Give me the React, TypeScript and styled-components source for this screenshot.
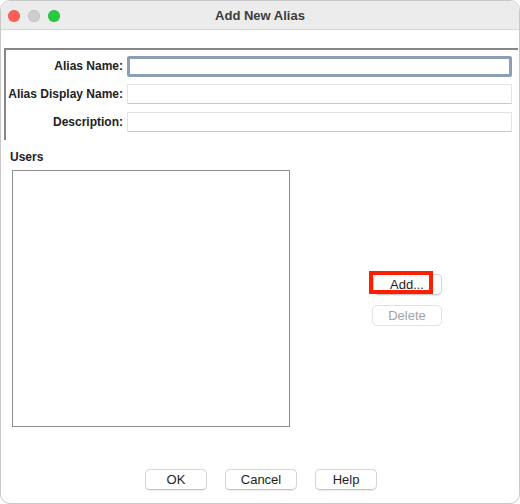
import React from "react";
import styled, { createGlobalStyle } from "styled-components";

const Global = createGlobalStyle`
  html, body { margin: 0; padding: 0; background: #ffffff; }
  body { font-family: "Liberation Sans", Arial, sans-serif; }
  * { box-sizing: border-box; }
`;

const Window = styled.div`
  width: 520px;
  height: 504px;
  background: #ffffff;
  border: 1px solid #c9c9c9;
  border-radius: 10px;
  overflow: hidden;
  display: flex;
  flex-direction: column;
`;

const TitleBar = styled.div`
  height: 29px;
  flex: none;
  background: #ececec;
  border-bottom: 1px solid #d6d6d6;
  display: grid;
  grid-template-columns: 1fr auto 1fr;
  align-items: center;
`;

const Lights = styled.div`
  display: flex;
  gap: 8px;
  padding-left: 7px;
  padding-top: 1px;
`;

const Light = styled.span<{ $color: string }>`
  width: 12px;
  height: 12px;
  border-radius: 50%;
  background: ${(p) => p.$color};
  box-shadow: inset 0 0 0 0.5px rgba(0, 0, 0, 0.12);
`;

const Title = styled.div`
  font-size: 13px;
  font-weight: 700;
  color: #3d3d3d;
  padding-top: 1px;
`;

const Content = styled.div`
  flex: 1;
  display: flex;
  flex-direction: column;
`;

const FormPanel = styled.div`
  margin: 18px 1px 0 3px;
  height: 92px;
  border-top: 2px solid #878787;
  border-left: 2px solid #878787;
  padding: 6px 6px 0 0;
  display: grid;
  grid-template-columns: 117px 1fr;
  column-gap: 4px;
  row-gap: 8px;
  grid-auto-rows: 20px;
  align-items: center;
`;

const Label = styled.label`
  font-size: 12px;
  font-weight: 700;
  color: #222222;
  text-align: right;
  white-space: nowrap;
`;

const Field = styled.div<{ $focused?: boolean }>`
  height: ${(p) => (p.$focused ? "21px" : "20px")};
  background: #ffffff;
  border: ${(p) => (p.$focused ? "3px solid #8c9db4" : "1px solid #e3e3e3")};
  border-bottom-color: ${(p) => (p.$focused ? "#8c9db4" : "#c8c8c8")};
  border-radius: ${(p) => (p.$focused ? "2px" : "1px")};
`;

const SectionLabel = styled.div`
  margin: 10px 0 0 9px;
  font-size: 12px;
  font-weight: 700;
  line-height: 14px;
  color: #222222;
`;

const UsersRow = styled.div`
  margin-top: 6px;
  display: flex;
`;

const UserList = styled.div`
  margin-left: 11px;
  width: 278px;
  height: 257px;
  border: 1px solid #8e8e8e;
  background: #ffffff;
`;

const SideButtons = styled.div`
  flex: 1;
  display: flex;
  flex-direction: column;
  align-items: center;
  justify-content: center;
  gap: 10px;
  padding-left: 5px;
  padding-top: 2px;
`;

const Button = styled.button<{ $w: number }>`
  width: ${(p) => p.$w}px;
  height: 21px;
  padding: 0;
  background: #ffffff;
  border: 1px solid #d6d6d6;
  border-bottom-color: #c4c4c4;
  border-radius: 5px;
  box-shadow: 0 0.5px 1px rgba(0, 0, 0, 0.08);
  font-family: "Liberation Sans", Arial, sans-serif;
  font-size: 13px;
  color: #1e1e1e;
  line-height: 19px;
  &:disabled {
    color: #a3a3a3;
    border-color: #e2e2e2;
    box-shadow: none;
  }
`;

const Highlighted = styled.div`
  position: relative;
`;

const RedBox = styled.div`
  position: absolute;
  left: -4px;
  top: -3px;
  width: 64px;
  height: 23px;
  border: 4px solid #fe1f00;
  pointer-events: none;
`;

const Footer = styled.div`
  margin-top: 42px;
  display: flex;
  justify-content: center;
  gap: 18px;
  padding-left: 2px;
`;

export default function App() {
  return (
    <>
      <Global />
      <Window>
        <TitleBar>
          <Lights>
            <Light $color="#fe5f57" />
            <Light $color="#cdcdcd" />
            <Light $color="#28c840" />
          </Lights>
          <Title>Add New Alias</Title>
          <div />
        </TitleBar>
        <Content>
          <FormPanel>
            <Label>Alias Name:</Label>
            <Field $focused />
            <Label>Alias Display Name:</Label>
            <Field />
            <Label>Description:</Label>
            <Field />
          </FormPanel>
          <SectionLabel>Users</SectionLabel>
          <UsersRow>
            <UserList />
            <SideButtons>
              <Highlighted>
                <Button $w={69}>Add...</Button>
                <RedBox />
              </Highlighted>
              <Button $w={70} disabled>
                Delete
              </Button>
            </SideButtons>
          </UsersRow>
          <Footer>
            <Button $w={62}>OK</Button>
            <Button $w={72}>Cancel</Button>
            <Button $w={62}>Help</Button>
          </Footer>
        </Content>
      </Window>
    </>
  );
}
